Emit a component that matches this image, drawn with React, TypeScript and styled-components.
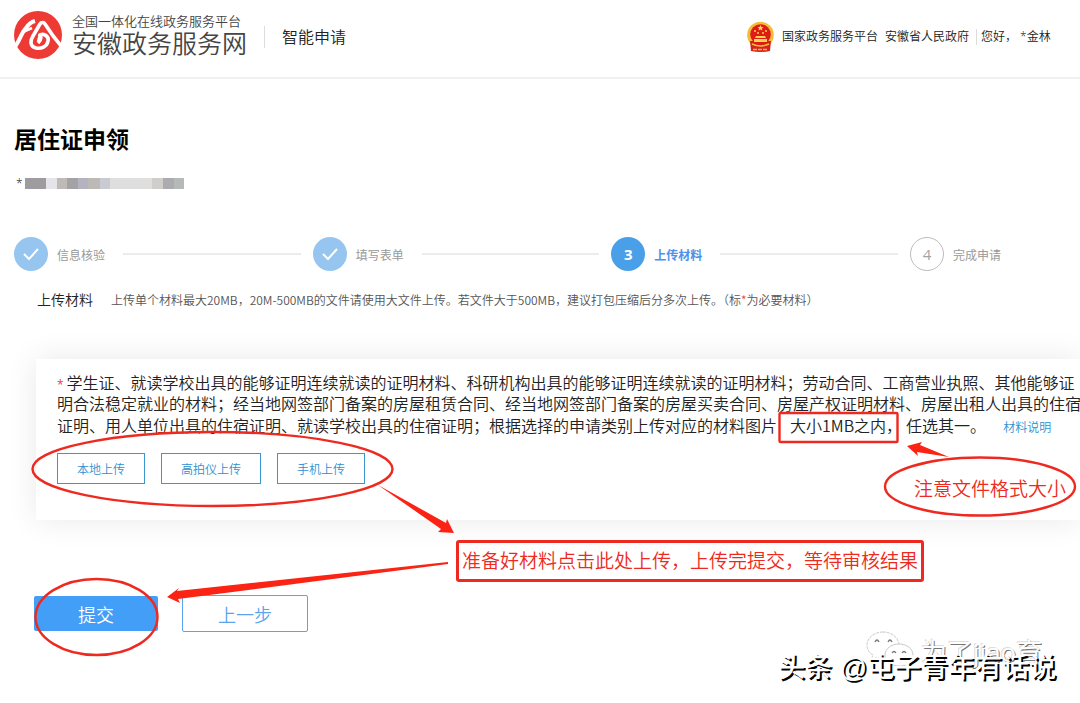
import React from 'react';
import styled, { createGlobalStyle } from 'styled-components';

const GlobalStyle = createGlobalStyle`
  *, *::before, *::after { box-sizing: border-box; }
  body {
    margin: 0;
    background: #fff;
    color: #222;
    font-family: "Open Sans", "Noto Sans CJK SC", sans-serif;
    font-size: 12px;
    font-weight: 350;
    overflow-x: hidden;
  }
  button { font-family: inherit; cursor: pointer; }
  a { color: inherit; text-decoration: none; }
`;

const Page = styled.div`
  position: relative;
  overflow: hidden;
  padding-bottom: 71px;
`;

const Header = styled.header`
  display: flex;
  align-items: center;
  height: 79px;
  padding: 0 27px 4px 14px;
  border-bottom: 2px solid #f0f0f0;
`;

const Brand = styled.a`
  display: flex;
  align-items: center;
  gap: 10px;
  padding-bottom: 4px;
  color: #444;
`;

const BrandText = styled.span`
  display: flex;
  flex-direction: column;
  white-space: nowrap;
`;

const BrandTop = styled.span`
  font-size: 13px;
  line-height: 16px;
`;

const BrandName = styled.span`
  font-size: 25px;
  line-height: 28px;
`;

const Divider = styled.span<{ $height: number }>`
  width: 1px;
  height: ${(p) => p.$height}px;
  background: #dcdcdc;
`;

const Section = styled.span`
  margin-left: 17px;
  font-size: 16px;
  line-height: 24px;
`;

const BrandDivider = styled(Divider)`
  margin-left: 17px;
`;

const HeaderLinks = styled.nav`
  display: flex;
  align-items: center;
  gap: 4px;
  margin-left: auto;
  line-height: 20px;
  white-space: nowrap;
`;

const PortalLink = styled.a`
  display: flex;
  align-items: center;
  gap: 8px;
  min-width: 134px;
`;

const ProvinceLink = styled.a`
  min-width: 87px;
`;

const Greeting = styled.span`
  min-width: 72px;
`;

const Title = styled.h1`
  margin: 44px 0 0 14px;
  font-size: 23px;
  line-height: 32px;
  font-weight: 700;
  color: #000;
`;

const Applicant = styled.div`
  display: flex;
  align-items: center;
  gap: 2px;
  height: 16px;
  margin: 20px 0 0 16px;
`;

const Mosaic = styled.span`
  display: flex;
  height: 11px;
`;

const MosaicCell = styled.i<{ $span: number; $tone: string }>`
  width: ${(p) => p.$span}px;
  background: ${(p) => p.$tone};
`;

const Steps = styled.ol`
  display: flex;
  margin: 46px 0 0;
  padding: 0 0 0 14px;
  list-style: none;
`;

const Step = styled.li<{ $last?: boolean }>`
  display: flex;
  align-items: center;
  flex: ${(p) => (p.$last ? '0 0 170px' : '1 1 0')};
`;

type StepState = 'done' | 'current' | 'todo';

const StepMark = styled.span<{ $state: StepState }>`
  display: flex;
  align-items: center;
  justify-content: center;
  width: 34px;
  height: 34px;
  border-radius: 50%;
  border: ${(p) => (p.$state === 'todo' ? '1px solid #bdbdbd' : 'none')};
  background: ${(p) => ({ done: '#96c6f0', current: '#4a9fe9', todo: '#fff' })[p.$state]};
  color: ${(p) => (p.$state === 'todo' ? '#a5a5a5' : '#fff')};
  font-size: 15px;
  font-weight: ${(p) => (p.$state === 'current' ? 700 : 400)};
`;

const StepLabel = styled.span<{ $state: StepState }>`
  min-width: 50px;
  margin-left: 9px;
  padding-top: 3px;
  line-height: 20px;
  white-space: nowrap;
  color: ${(p) => (p.$state === 'current' ? '#4a92ea' : '#999')};
  font-weight: ${(p) => (p.$state === 'current' ? 700 : 400)};
`;

const StepLine = styled.span`
  flex: 1;
  height: 2px;
  margin: 0 12px 0 16px;
  background: #ececec;
`;

const UploadHead = styled.div`
  display: flex;
  align-items: center;
  gap: 18px;
  margin: 18px 0 0 37px;
  line-height: 22px;
  white-space: nowrap;
`;

const UploadTitle = styled.h2`
  margin: 0;
  font-size: 14px;
  font-weight: inherit;
`;

const UploadHint = styled.p`
  margin: 0;
  color: #555;
  font-family: "Noto Sans CJK SC", sans-serif;
`;

const Required = styled.span`
  color: #f04040;
`;

const LeadMark = styled(Required)`
  margin-right: 3px;
  font-size: 12px;
  line-height: 12px;
  font-weight: 400;
`;

const Card = styled.section`
  margin: 48px 0 0 36px;
  padding: 14px 0 36px 21px;
  background: #fff;
  box-shadow: 0 0 30px rgba(0, 0, 0, 0.09);
`;

const Material = styled.p`
  margin: 0;
  font-size: 16px;
  line-height: 21px;
`;

const MaterialLine = styled.span`
  display: block;
  white-space: nowrap;
`;

const SizeLimit = styled.span`
  margin: 0 4px 0 13px;
  font-family: "Noto Sans CJK SC", sans-serif;
`;

const MaterialLink = styled.a`
  margin-left: 17px;
  font-size: 12px;
  line-height: 12px;
  color: #2f8fd0;
`;

const UploadButtons = styled.div`
  display: flex;
  gap: 16px;
  margin-top: 16px;
`;

const UploadButton = styled.button`
  height: 31px;
  padding: 0 19px;
  border: 1px solid #3a97cf;
  background: #fff;
  color: #2f8fd0;
  font-size: 12px;
  font-weight: inherit;
`;

const Actions = styled.div`
  display: flex;
  align-items: center;
  gap: 24px;
  margin: 75px 0 0 34px;
`;

const ActionButton = styled.button<{ $primary?: boolean }>`
  width: ${(p) => (p.$primary ? 124 : 126)}px;
  height: ${(p) => (p.$primary ? 35 : 37)}px;
  padding: 0;
  border: ${(p) => (p.$primary ? 'none' : '1px solid #5ba3ec')};
  border-radius: 2px;
  background: ${(p) => (p.$primary ? '#429ef6' : '#fff')};
  color: ${(p) => (p.$primary ? '#fff' : '#5ba3ec')};
  font-size: 18px;
  font-weight: inherit;
`;

const Marks = styled.svg`
  position: absolute;
  left: 0;
  top: 0;
  pointer-events: none;
`;

const Note = styled.div<{ $x: number; $y: number; $boxed?: boolean }>`
  position: absolute;
  left: ${(p) => p.$x}px;
  top: ${(p) => p.$y}px;
  padding: ${(p) => (p.$boxed ? '4px 3px' : '0')};
  border: ${(p) => (p.$boxed ? '3px solid #ee2a20' : 'none')};
  border-radius: 3px;
  color: #ee2a20;
  font-size: 19px;
  line-height: 28px;
  white-space: nowrap;
`;

const AccountMark = styled.div`
  position: absolute;
  left: 866px;
  top: 630px;
  display: flex;
  align-items: flex-start;
  gap: 6px;
  color: #fff;
  font-size: 26px;
  line-height: 44px;
  font-weight: 400;
  text-shadow: 1px 1px 0 #777, -1px -1px 0 #ddd;
  white-space: nowrap;
`;

const AuthorMark = styled.div`
  position: absolute;
  left: 778px;
  top: 649px;
  color: #fff;
  font-family: "Liberation Sans", "Noto Sans CJK SC", sans-serif;
  font-size: 27px;
  line-height: 38px;
  font-weight: 500;
  text-shadow: 2px 2px 0 #000;
  white-space: nowrap;
`;

const Logo = () => (
  <svg width="48" height="50" viewBox="0 0 48 50" aria-hidden="true">
    <circle cx="24" cy="25" r="24" fill="#ee3a34" />
    <g fill="none" stroke="#fff" strokeLinejoin="round">
      <path d="M0 38C6 31 7 23 12 18C14 15 17 12 21 11" strokeWidth="4" />
      <path d="M9 22L18 18" strokeWidth="2.6" />
      <path d="M24 33C26 31 28 28 26 25C31 23 35 27 34 31C33 37 27 39 22 38C16 37 16 31 19 26L26 14C27 12 30 12 31 14C36 22 41 29 48 37" strokeWidth="3.6" />
      <path d="M26 24L24 32" strokeWidth="2.6" />
    </g>
  </svg>
);

const Emblem = () => (
  <svg width="27" height="32" viewBox="0 0 27 32" aria-hidden="true">
    <circle cx="13.5" cy="14" r="13.3" fill="#f3bd3c" />
    <path d="M3 20L4 30Q13.5 32 23 30L24 20Z" fill="#d8201c" />
    <circle cx="13.5" cy="13.5" r="10.3" fill="#de1b16" />
    <path d="M13.5 4l.9 1.9 2.1.2-1.6 1.4.5 2-1.9-1-1.9 1 .5-2-1.6-1.4 2.1-.2z" fill="#ffd34d" />
    <g fill="#ffd34d">
      <circle cx="8" cy="10" r="1" />
      <circle cx="19" cy="10" r="1" />
      <circle cx="11" cy="12" r="1" />
      <circle cx="16" cy="12" r="1" />
      <path d="M9 15h9l1 2H8zM7 18h13v3H7z" />
    </g>
    <path d="M5 23Q13.5 27 22 23" fill="none" stroke="#f3bd3c" strokeWidth="1.6" />
    <path d="M6 28.500h15" stroke="#f3bd3c" strokeWidth="1.6" strokeDasharray="4 1" />
  </svg>
);

const Tick = () => (
  <svg width="18" height="14" viewBox="0 0 18 14" aria-hidden="true">
    <path d="M2 7L7 12L16 2" fill="none" stroke="#fff" strokeWidth="2" />
  </svg>
);

const ChatBubbles = () => (
  <svg width="49" height="40" viewBox="0 0 49 40" aria-hidden="true">
    <g fill="#fff" stroke="#c9c9c9" strokeWidth="1">
      <path d="M17 2C8 2 1 8 1 15C1 19 3 23 7 25L5 30L11 27C13 28 15 28 18 28C27 28 33 22 33 15C33 8 26 2 17 2Z" strokeDasharray="3 1" />
      <path d="M33 14C25 14 19 19 19 25C19 31 25 36 33 36C35 36 37 36 38 35L43 38L42 33C45 31 47 28 47 25C47 19 41 14 33 14Z" />
    </g>
    <g fill="none" stroke="#777" strokeWidth="1.3">
      <path d="M9 12q2-4 4 0M22 12q2-4 4 0M26 23q2-3 4 0M36 23q2-3 4 0" />
    </g>
  </svg>
);

const mosaic: [number, string][] = [
  [21, '#9f9c9f'], [11, '#e5e5e9'], [10, '#bdbab8'], [11, '#a5a2a5'],
  [10, '#b4b4c0'], [12, '#bdb9b6'], [10, '#cacad3'], [42, '#dedede'],
  [11, '#d0cecd'], [11, '#acacb0'], [10, '#b5bab9'],
];

const steps: { label: string; state: StepState }[] = [
  { label: '信息核验', state: 'done' },
  { label: '填写表单', state: 'done' },
  { label: '上传材料', state: 'current' },
  { label: '完成申请', state: 'todo' },
];

export default function App() {
  return (
    <Page lang="zh-CN">
      <GlobalStyle />
      <Header>
        <Brand href="#">
          <Logo />
          <BrandText>
            <BrandTop>全国一体化在线政务服务平台</BrandTop>
            <BrandName>安徽政务服务网</BrandName>
          </BrandText>
        </Brand>
        <BrandDivider $height={22} />
        <Section>智能申请</Section>
        <HeaderLinks>
          <PortalLink href="#">
            <Emblem />
            国家政务服务平台
          </PortalLink>
          <ProvinceLink href="#">安徽省人民政府</ProvinceLink>
          <Divider $height={16} />
          <Greeting>您好， *金林</Greeting>
        </HeaderLinks>
      </Header>

      <main>
        <Title>居住证申领</Title>
        <Applicant>
          *
          <Mosaic>
            {mosaic.map(([span, tone], i) => (
              <MosaicCell key={i} $span={span} $tone={tone} />
            ))}
          </Mosaic>
        </Applicant>

        <Steps>
          {steps.map(({ label, state }, i) => {
            const last = i === steps.length - 1;
            return (
              <Step key={label} $last={last}>
                <StepMark $state={state}>{state === 'done' ? <Tick /> : i + 1}</StepMark>
                <StepLabel $state={state}>{label}</StepLabel>
                {!last && <StepLine />}
              </Step>
            );
          })}
        </Steps>

        <UploadHead>
          <UploadTitle>上传材料</UploadTitle>
          <UploadHint>
            上传单个材料最大20MB，20M-500MB的文件请使用大文件上传。若文件大于500MB，建议打包压缩后分多次上传。（标
            <Required>*</Required>为必要材料）
          </UploadHint>
        </UploadHead>

        <Card>
          <Material>
            <MaterialLine>
              <LeadMark>*</LeadMark>学生证、就读学校出具的能够证明连续就读的证明材料、科研机构出具的能够证明连续就读的证明材料；劳动合同、工商营业执照、其他能够证
            </MaterialLine>
            <MaterialLine>
              明合法稳定就业的材料；经当地网签部门备案的房屋租赁合同、经当地网签部门备案的房屋买卖合同、房屋产权证明材料、房屋出租人出具的住宿
            </MaterialLine>
            <MaterialLine>
              证明、用人单位出具的住宿证明、就读学校出具的住宿证明；根据选择的申请类别上传对应的材料图片
              <SizeLimit>大小1MB之内，</SizeLimit>任选其一。
              <MaterialLink href="#">材料说明</MaterialLink>
            </MaterialLine>
          </Material>
          <UploadButtons>
            <UploadButton type="button">本地上传</UploadButton>
            <UploadButton type="button">高拍仪上传</UploadButton>
            <UploadButton type="button">手机上传</UploadButton>
          </UploadButtons>
        </Card>

        <Actions>
          <ActionButton type="button" $primary>提交</ActionButton>
          <ActionButton type="button">上一步</ActionButton>
        </Actions>
      </main>

      <Marks width="1080" height="703" viewBox="0 0 1080 703" aria-hidden="true">
        <g fill="none" stroke="#ee2a20" strokeWidth="2.4">
          <ellipse cx="212.500" cy="469" rx="180" ry="37" />
          <ellipse cx="980" cy="486.500" rx="95" ry="29" />
          <ellipse cx="96.500" cy="617" rx="61" ry="38" />
          <rect x="779.500" y="413" width="118" height="29" rx="1" />
        </g>
        <g fill="#fb2314">
          <path d="M378 485L446 523L447 519L454 533L438 532L441 529Z" />
          <path d="M448 562L177 591L179 588L167 597L180 603L178 599L448 564Z" />
          <path d="M949 457L920 445L922 442L907 446L918 456L917 452Z" />
        </g>
      </Marks>
      <Note $x={456} $y={540} $boxed>准备好材料点击此处上传，上传完提交，等待审核结果</Note>
      <Note $x={914} $y={475}>注意文件格式大小</Note>
      <AccountMark>
        <ChatBubbles />
        为了jiao育
      </AccountMark>
      <AuthorMark>头条 @屯子青年有话说</AuthorMark>
    </Page>
  );
}
